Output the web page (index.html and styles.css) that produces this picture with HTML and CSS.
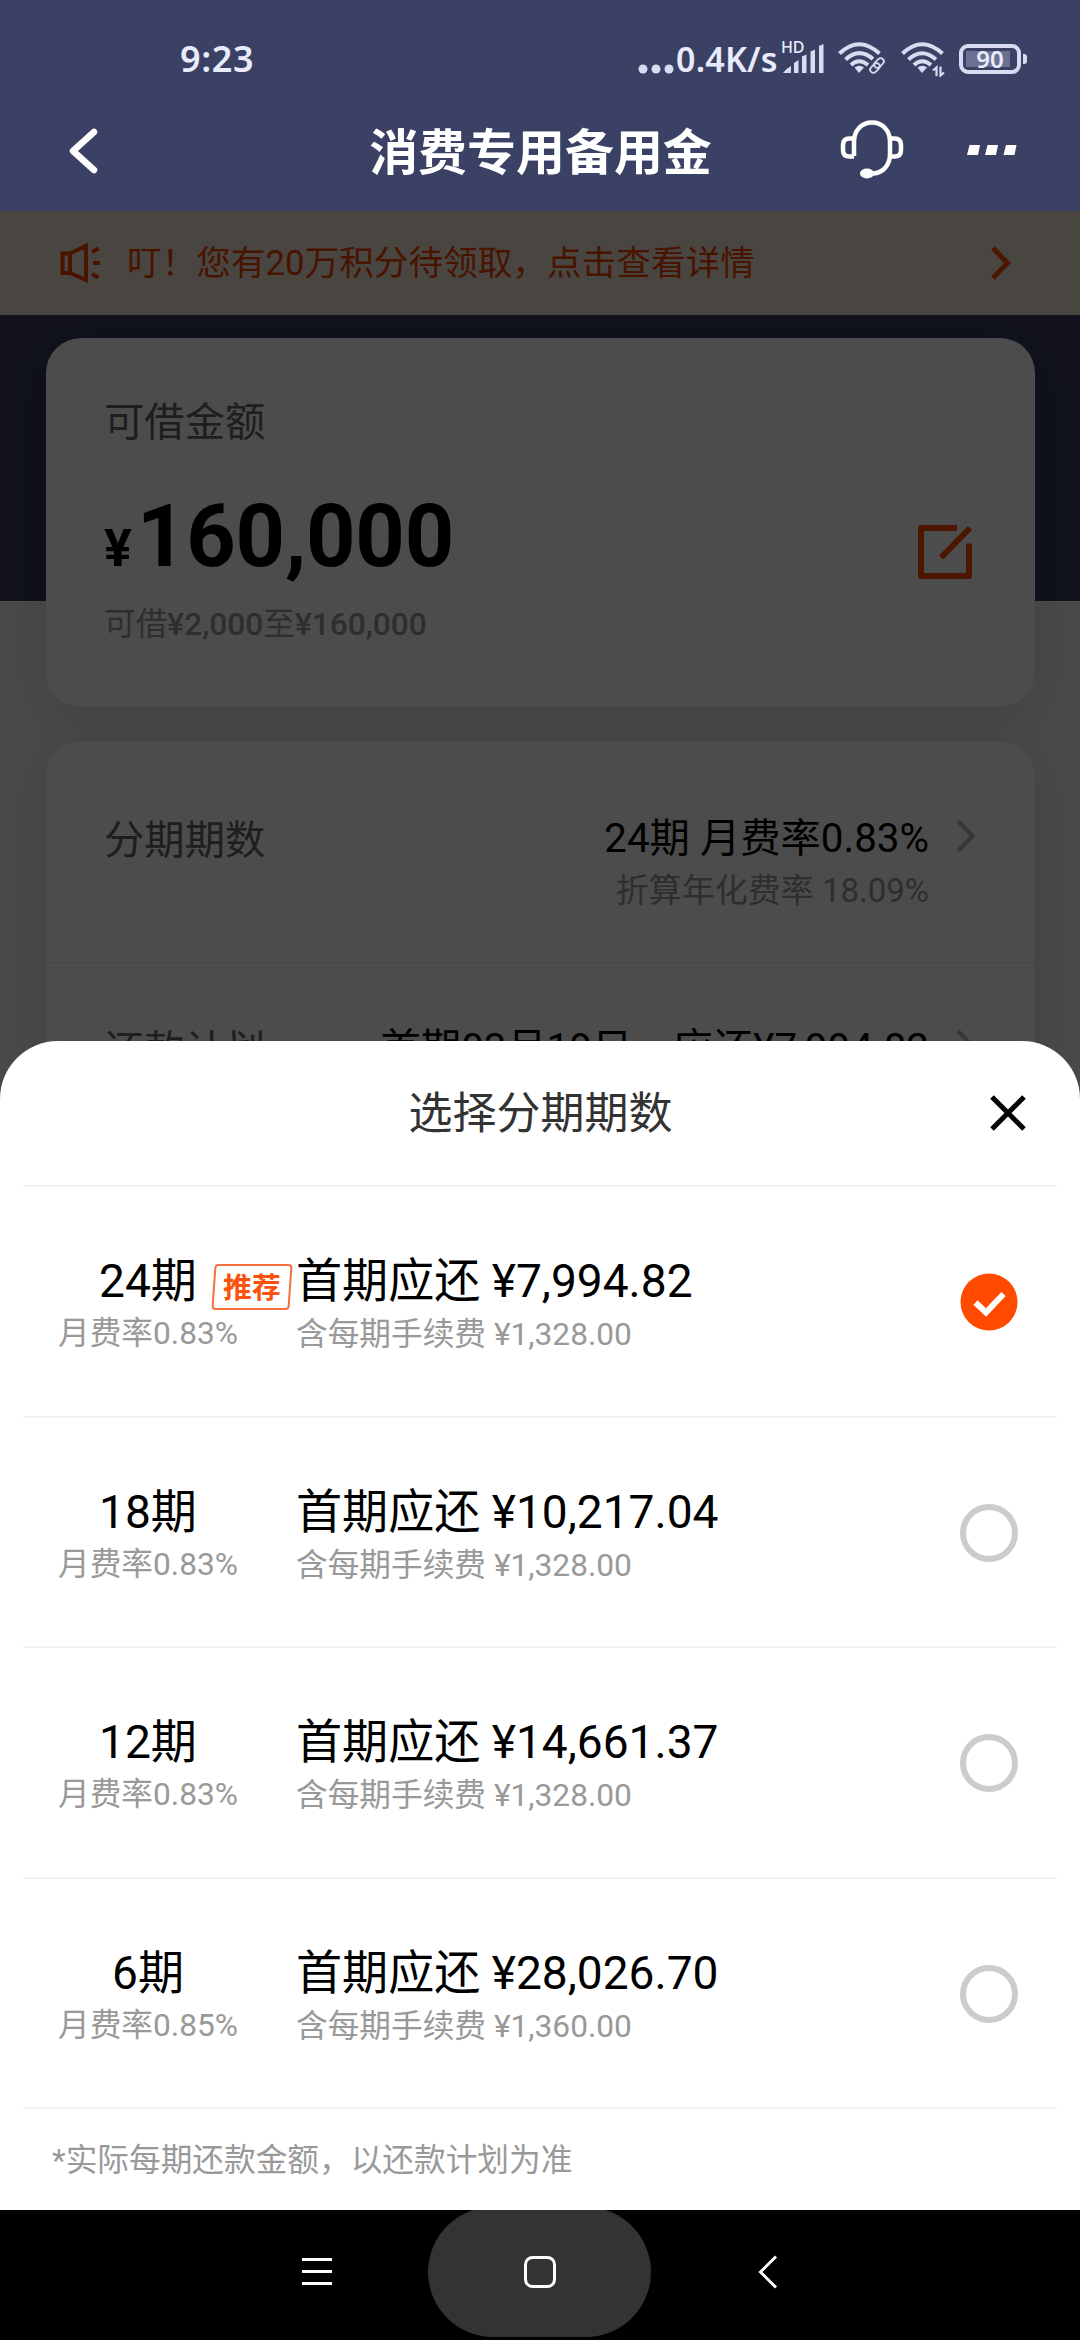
FILE: index.html
```html
<!DOCTYPE html>
<html lang="zh-CN">
<head>
<meta charset="utf-8">
<title>消费专用备用金</title>
<link rel="stylesheet" href="styles.css">
</head>
<body>
<div class="screen">
  <header class="top">
    <div class="status">
      <span class="clock">9:23</span>
      <div class="status-right">
        <svg class="s-dots" width="36" height="34" viewBox="0 0 36 34"><g fill="#d9dcf0"><circle cx="5" cy="27" r="4.5"/><circle cx="18" cy="27" r="4.5"/><circle cx="31" cy="27" r="4.5"/></g></svg>
        <span class="speed">0.4K/s</span>
        <span class="signal">
          <svg width="42" height="34" viewBox="0 0 42 34"><g fill="#d9dcf0"><path d="M0 31q4-5 8-7v7zM11 21l4.500-3v13H11zM19 14.500l4.500-2V31H19zM27.500 9.500l4.500-2V31h-4.500zM36 4l4.500-2V31H36z"/></g></svg>
          <span class="hd">HD</span>
        </span>
        <svg class="wifi" width="50" height="36" viewBox="0 0 50 36"><g fill="none" stroke="#d9dcf0" stroke-width="4"><path d="M1.500 12.500Q21 -6 41.500 12.500"/><path d="M7.500 18.500Q21 6 35 18"/><path d="M13 24Q21 16.500 30 24"/></g><path d="M16.500 26.500q5-3.500 9.500 0L21 32z" fill="#d9dcf0"/><g fill="none" stroke="#d9dcf0" stroke-width="1.800"><rect x="-5.500" y="-3.200" width="11" height="6.400" rx="3.200" transform="translate(41 22) rotate(-45)"/><rect x="-5.500" y="-3.200" width="11" height="6.400" rx="3.200" transform="translate(37 27) rotate(-45)"/></g></svg>
        <svg class="wifi" width="46" height="36" viewBox="0 0 46 36"><g fill="none" stroke="#d9dcf0" stroke-width="4"><path d="M1.500 12.500Q21 -6 41.500 12.500"/><path d="M7.500 18.500Q21 6 35 18.500"/><path d="M13 24Q21 16.500 30 24"/></g><path d="M16.500 26.500q5-3.500 9.500 0L21 32z" fill="#d9dcf0"/><path d="M35.500 35v-8.500l-3.500 3M39.500 25.500v9l3.500-3" fill="none" stroke="#d9dcf0" stroke-width="2.200"/></svg>
        <span class="battery"><span class="battery-level">90</span></span>
        <i class="battery-cap"></i>
      </div>
    </div>
    <div class="nav">
      <svg class="nav-back" width="32" height="48" viewBox="0 0 32 48"><path d="M27 5L6 24l21 19" fill="none" stroke="#fff" stroke-width="6.500" stroke-linecap="round" stroke-linejoin="round"/></svg>
      <h1>消费专用备用金</h1>
      <svg class="nav-help" width="64" height="62" viewBox="0 0 64 62"><g fill="none" stroke="#fff" stroke-width="4.500"><path d="M14 37V23C14 11 22 3.500 32 3.500S50 11 50 23v12c0 11-7 19-17 19.500"/><path d="M14 19.500H9.500Q3 19.500 3 26v5q0 6.500 6.500 6.500H14"/><path d="M50 19.500h4.500Q61 19.500 61 26v5q0 6.500-6.500 6.500H50"/></g><ellipse cx="27" cy="54.500" rx="7" ry="5" fill="#fff"/></svg>
      <svg class="nav-more" width="50" height="12" viewBox="0 0 50 12"><path d="M2.500 1h10.500l-2 10H0zM20.500 1H31l-2 10H18zM39 1h10.500l-2 10h-11z" fill="#fff"/></svg>
    </div>
  </header>

  <main class="page">
    <div class="notice">
      <svg width="42" height="42" viewBox="0 0 42 42"><g fill="none" stroke="#f04400" stroke-width="4"><path d="M10 11.500L26 4v34L10 31zM2.500 11.500H10V31H2.500z"/><path d="M33 21h7M32 10l6.500-3.500M32 32l6.500 3.500"/></g></svg>
      <span>叮！您有20万积分待领取，点击查看详情</span>
      <svg width="20" height="34" viewBox="0 0 20 34"><path d="M2 2l14.500 15L2 32" fill="none" stroke="#ff4a00" stroke-width="5"/></svg>
    </div>
    <div class="content">
      <section class="card amount">
        <div>
          <div class="label">可借金额</div>
          <div class="sum"><small>¥</small>160,000</div>
          <div class="range">可借<b>¥2,000</b>至<b>¥160,000</b></div>
        </div>
        <svg class="edit" width="56" height="56" viewBox="0 0 56 56"><path d="M40 4H4v48h48V19.500" fill="none" stroke="#ff4a00" stroke-width="6" stroke-linejoin="round"/><path d="M24 33.500L53 4" stroke="#ff4a00" stroke-width="6"/></svg>
      </section>
      <section class="card plan">
        <div class="plan-row">
          <div class="label">分期期数</div>
          <div class="value"><div>24期 月费率0.83%</div><p>折算年化费率 18.09%</p></div>
          <svg width="20" height="34" viewBox="0 0 20 34"><path d="M2 2l14.500 15L2 32" fill="none" stroke="#b8b8b8" stroke-width="4"/></svg>
        </div>
        <div class="plan-row second">
          <div class="label">还款计划</div>
          <div class="value"><div>首期03月19日　应还¥7,994.82</div></div>
          <svg width="20" height="34" viewBox="0 0 20 34"><path d="M2 2l14.500 15L2 32" fill="none" stroke="#b8b8b8" stroke-width="4"/></svg>
        </div>
      </section>
    </div>
    <div class="mask"></div>
  </main>

  <section class="sheet">
    <div class="sheet-head">
      <h2>选择分期期数</h2>
      <svg width="36" height="36" viewBox="0 0 36 36"><path d="M2 2l32 32M34 2L2 34" stroke="#000" stroke-width="5"/></svg>
    </div>
    <ul class="options">
      <li>
        <div class="term"><div class="main">24期</div><p>月费率0.83%</p><span class="tag"><span>推荐</span></span></div>
        <div class="pay"><div class="main">首期应还 ¥7,994.82</div><p>含每期手续费 ¥1,328.00</p></div>
        <svg class="check" width="58" height="58" viewBox="0 0 58 58"><circle cx="29" cy="29" r="28.500" fill="#ff4a00"/><path d="M15.500 29.500L26 39.500 43.500 21" fill="none" stroke="#fff" stroke-width="6"/></svg>
      </li>
      <li>
        <div class="term"><div class="main">18期</div><p>月费率0.83%</p></div>
        <div class="pay"><div class="main">首期应还 ¥10,217.04</div><p>含每期手续费 ¥1,328.00</p></div>
        <i class="radio"></i>
      </li>
      <li>
        <div class="term"><div class="main">12期</div><p>月费率0.83%</p></div>
        <div class="pay"><div class="main">首期应还 ¥14,661.37</div><p>含每期手续费 ¥1,328.00</p></div>
        <i class="radio"></i>
      </li>
      <li>
        <div class="term"><div class="main">6期</div><p>月费率0.85%</p></div>
        <div class="pay"><div class="main">首期应还 ¥28,026.70</div><p>含每期手续费 ¥1,360.00</p></div>
        <i class="radio"></i>
      </li>
    </ul>
    <p class="note">*实际每期还款金额，以还款计划为准</p>
  </section>

  <footer class="keys">
    <svg width="32" height="34" viewBox="0 0 32 34"><path d="M1 4.500h30M1 16.500h30M1 28.500h30" stroke="#fff" stroke-width="3"/></svg>
    <span class="home"><svg width="34" height="34" viewBox="0 0 34 34"><rect x="2.500" y="2.500" width="29" height="29" rx="7" fill="none" stroke="#fff" stroke-width="3"/></svg></span>
    <svg width="20" height="34" viewBox="0 0 20 34"><path d="M18 1.500L2.500 17 18 32.500" fill="none" stroke="#fff" stroke-width="3"/></svg>
  </footer>
</div>
</body>
</html>
```
FILE: styles.css
```css
* { box-sizing: border-box; margin: 0; padding: 0; }
body { font-family: Roboto, "Noto Sans CJK SC", sans-serif; }
svg { display: block; flex: none; }
i { display: block; }

.screen {
  display: flex;
  flex-direction: column;
  width: 1080px;
  height: 2340px;
  overflow: hidden;
  background: #000;
}

/* status bar and title bar */
.top { height: 211px; flex: none; background: #3a4165; color: #fff; }
.status {
  display: flex;
  align-items: center;
  justify-content: space-between;
  height: 93px;
  padding: 25px 53px 0 180px;
  font-family: "Noto Sans", sans-serif;
  color: #e9ebfb;
}
.clock { font-size: 36px; font-weight: 600; line-height: 50px; letter-spacing: .6px; }
.status-right { display: flex; align-items: center; }
.speed { width: 101px; margin-left: 2px; font-size: 34px; font-weight: 600; line-height: 50px; letter-spacing: .2px; white-space: nowrap; }
.signal { position: relative; width: 42px; margin-left: 6px; }
.hd { position: absolute; left: -2px; top: -3px; font-size: 16px; line-height: 16px; font-weight: 500; letter-spacing: -.3px; }
.wifi { margin-left: 13px; }
.battery {
  width: 62px;
  height: 30px;
  margin-left: 12px;
  padding: 3px;
  border: 4px solid #d9dcf0;
  border-radius: 9px;
}
.battery-level {
  display: block;
  width: 44px;
  height: 16px;
  padding-left: 4px;
  background: #6b7190;
  font-size: 24px;
  line-height: 16px;
  font-weight: 600;
  text-align: center;
}
.battery-cap { width: 4px; height: 10px; margin-left: 2px; background: #d9dcf0; border-radius: 0 3px 3px 0; }
.nav {
  display: grid;
  grid-template-columns: 32px 1fr 64px 50px;
  align-items: center;
  height: 118px;
  padding: 0 63px 0 67px;
}
.nav h1 { padding: 4px 0 0 79px; text-align: center; font-size: 48.96px; line-height: 70px; font-weight: 700; }
.nav-back { margin-top: -3px; }
.nav-help { margin: -4px 0 0 -63px; }
.nav-more { margin-top: -4px; }

/* dimmed page, running on behind the sheet's rounded corners */
.page { position: relative; height: 890px; flex: none; margin-bottom: -60px; background: #f7f7f7; }
.notice {
  display: flex;
  align-items: center;
  height: 104px;
  padding: 0 69px 0 60px;
  background: #f5e9dc;
  color: #f04400;
  font-size: 34.65px;
  line-height: 50px;
}
.notice span { flex: 1; margin-left: 25px; }
.content {
  display: flex;
  flex-direction: column;
  gap: 34px;
  height: 786px;
  padding: 23px 45px 0 46px;
  background: linear-gradient(#373b60 0 286px, #f7f7f7 286px);
  overflow: hidden;
}
.card { flex: none; background: #fff; border-radius: 35px; box-shadow: 0 12px 60px rgba(0, 0, 0, .13); }
.label { font-size: 40.32px; line-height: 60px; color: #666; }
.amount { display: flex; justify-content: space-between; height: 369px; padding: 55px 62px 0 58px; }
.sum { margin-top: 34px; font-size: 86.4px; line-height: 100px; font-weight: 700; letter-spacing: -.2px; }
.sum small { margin-right: 5px; font-size: 51.84px; line-height: 1; letter-spacing: 0; }
.range { margin-top: 13px; font-size: 31.68px; line-height: 50px; color: #999; }
.range b { font-weight: 500; }
.edit { margin-top: 131px; }
.plan { height: 460px; }
.plan-row { display: flex; height: 223px; padding: 70px 59px 0 58px; border-bottom: 2px solid #f0f0f0; }
.plan-row.second { height: 237px; padding-top: 57px; }
.value { flex: 1; text-align: right; font-size: 40.32px; line-height: 56px; color: #000; }
.value p { font-size: 33px; line-height: 47px; color: #999; }
.plan-row svg { margin: 8px 0 0 27px; }
.mask { position: absolute; inset: 0; background: rgba(0, 0, 0, .7); }

/* installment sheet */
.sheet {
  position: relative;
  height: 1169px;
  flex: none;
  background: #fff;
  border-radius: 58px 58px 0 0;
}
.sheet-head { display: flex; align-items: center; height: 146px; margin: 0 23px; padding: 0 31px 0 32px; border-bottom: 2px solid #f2f2f2; }
.sheet-head h2 { flex: 1; padding: 1px 0 0 36px; text-align: center; font-size: 44px; line-height: 60px; font-weight: 400; color: #333; }
.options { margin: 0 23px; list-style: none; }
.options li {
  display: grid;
  grid-template-columns: 250px 1fr 58px;
  align-items: start;
  height: 230.5px;
  padding: 67px 39px 0 0;
  border-bottom: 2px solid #f2f2f2;
}
.main { font-size: 46.08px; line-height: 54px; color: #000; }
.options p { margin-top: 4px; font-size: 31.68px; line-height: 44px; color: #999; }
.term { position: relative; text-align: center; }
.pay { padding-left: 23px; }
.options .pay p { margin-top: 5px; }
.tag {
  position: absolute;
  left: 190px;
  top: 10px;
  width: 78px;
  height: 46px;
  border: 2px solid #f5703f;
  border-radius: 4px;
  transform: skewX(-4deg);
  color: #f9530f;
  font-size: 28.8px;
  line-height: 45px;
  font-weight: 700;
  text-align: center;
}
.tag span { display: block; transform: skewX(4deg); }
.check, .radio { width: 58px; height: 58px; margin-top: 19px; }
.radio { border: 6px solid #ccc; border-radius: 50%; }
.note { padding-left: 52px; font-size: 31.68px; line-height: 103px; color: #999; }

/* system keys */
.keys { display: flex; justify-content: center; align-items: flex-start; height: 130px; flex: none; overflow: hidden; }
.keys > svg { margin-top: 45px; }
.keys > svg:first-child { margin-right: 95px; }
.keys > svg:last-child { margin: 45px 1px 0 107px; }
.home {
  display: flex;
  align-items: center;
  justify-content: center;
  width: 223px;
  height: 130px;
  margin-top: -3px;
  border-radius: 65px;
  background: #333;
}
```
